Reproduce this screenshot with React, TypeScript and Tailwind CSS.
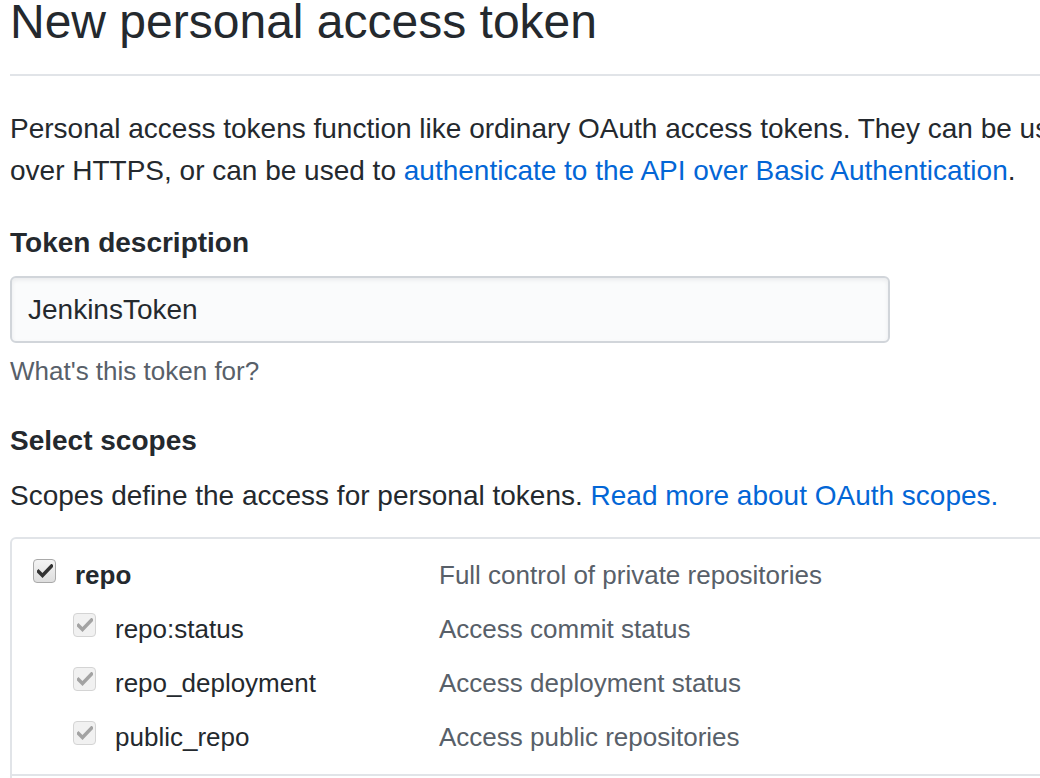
import React from "react";

type Scope = {
  name: string;
  description: string;
  parent?: boolean;
};

const scopes: Scope[] = [
  { name: "repo", description: "Full control of private repositories", parent: true },
  { name: "repo:status", description: "Access commit status" },
  { name: "repo_deployment", description: "Access deployment status" },
  { name: "public_repo", description: "Access public repositories" },
];

function CheckBox({ disabled }: { disabled?: boolean }) {
  return (
    <span
      className={`flex items-center justify-center w-[23px] h-[24px] rounded-[4px] border shrink-0 ${
        disabled
          ? "border-[#d4d4d4] bg-[#f1f1f1]"
          : "border-[#a9a9a9] bg-gradient-to-b from-[#f4f4f4] to-[#dedede]"
      }`}
    >
      <svg width="16" height="14" viewBox="0 0 16 14">
        <path
          d="M1.5 7.5 L5.5 11.5 L14.5 2"
          fill="none"
          stroke={disabled ? "#a3a3a3" : "#333333"}
          strokeWidth="3.4"
          strokeLinecap="square"
        />
      </svg>
    </span>
  );
}

function ScopeRow({ scope }: { scope: Scope }) {
  return (
    <div className="flex items-center h-[54px]">
      <div className={`w-[427px] flex items-center gap-[19px] ${scope.parent ? "pl-[21px]" : "pl-[61px]"}`}>
        <CheckBox disabled={!scope.parent} />
        <span className={`pt-[8px] text-[26px] ${scope.parent ? "font-bold" : ""}`}>{scope.name}</span>
      </div>
      <span className="pt-[8px] text-[26px] text-[#586069]">{scope.description}</span>
    </div>
  );
}

export default function App() {
  return (
    <div className="w-[1040px] h-[778px] overflow-hidden bg-white text-[#24292e] font-['Liberation_Sans',Arial,sans-serif]">
      <div className="w-[1600px] pl-[10px]">
        <div className="-mt-[14px] pb-4 border-b-2 border-[#e1e4e8]">
          <h2 className="text-[48px] leading-[72px] font-light">New personal access token</h2>
        </div>

        <p className="mt-8 text-[28px] leading-[42px] whitespace-nowrap">
          Personal access tokens function like ordinary OAuth access tokens. They can be used instead of a password for Git
          <br />
          over HTTPS, or can be used to{" "}
          <a className="text-[#0366d6]">authenticate to the API over Basic Authentication</a>.
        </p>

        <div className="mt-[30px]">
          <label className="block text-[28px] leading-[42px] font-bold">Token description</label>
          <div className="mt-3 w-[880px] h-[67px] flex items-center px-4 border-2 border-[#d1d5da] rounded-[6px] bg-[#fafbfc] shadow-[inset_0_2px_4px_rgba(27,31,35,0.075)] text-[28px]">
            JenkinsToken
          </div>
          <p className="mt-[13px] text-[26px] leading-[30px] text-[#586069]">What's this token for?</p>
        </div>

        <h3 className="mt-[34px] text-[28px] leading-[42px] font-bold">Select scopes</h3>
        <p className="mt-[13px] text-[28px] leading-[42px] whitespace-nowrap">
          Scopes define the access for personal tokens.{" "}
          <a className="text-[#0366d6]">Read more about OAuth scopes.</a>
        </p>

        <div className="mt-5 border-2 border-[#e1e4e8] rounded-[6px]">
          <div className="pt-[5px] pb-[14px] border-b-2 border-[#e1e4e8]">
            {scopes.map((s) => (
              <ScopeRow key={s.name} scope={s} />
            ))}
          </div>
          <div className="pt-[5px] pb-[14px]">
            <ScopeRow scope={{ name: "admin:org", description: "Full control of orgs and teams", parent: true }} />
          </div>
        </div>
      </div>
    </div>
  );
}
